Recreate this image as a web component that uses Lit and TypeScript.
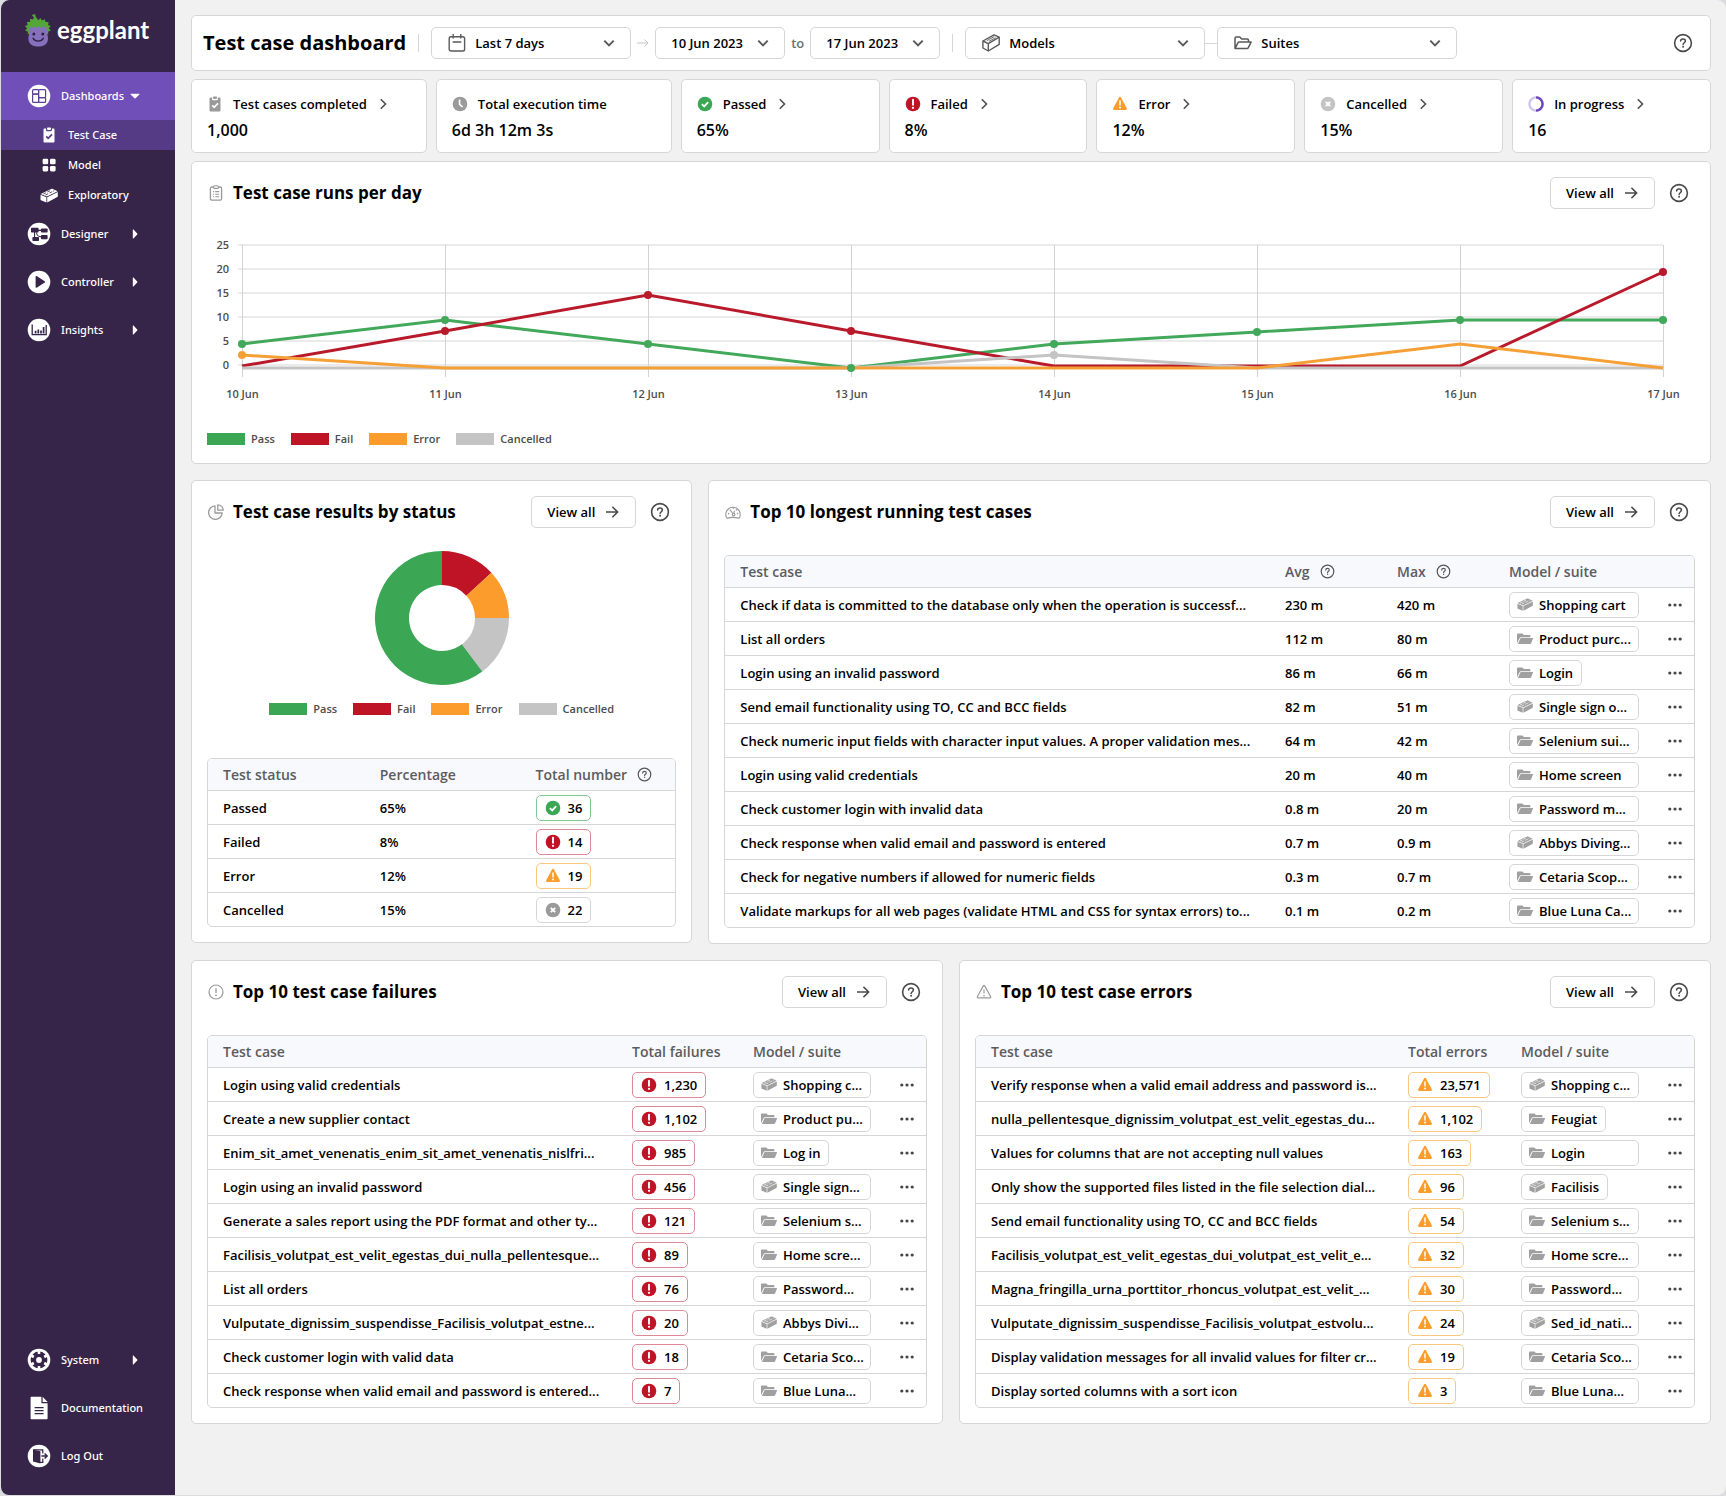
import { LitElement, html, css, svg, nothing, TemplateResult } from "lit";
import { customElement, property } from "lit/decorators.js";
import { classMap } from "lit/directives/class-map.js";

/* ---------- icons ---------- */

const QUESTION = svg`<circle cx="10" cy="10" r="8.4" fill="none" stroke="currentColor" stroke-width="1.6"/>
  <path d="M7.6 8.1C7.6 6.7 8.6 5.9 10 5.9s2.4.8 2.4 2.1c0 1.7-2.3 1.8-2.3 3.5" fill="none" stroke="currentColor" stroke-width="1.5" stroke-linecap="round"/>
  <circle cx="10.1" cy="13.8" r=".95" fill="currentColor"/>`;

const clipboard = (box: string, tick: string) => html`<svg viewBox=${box} width=${box.split(" ")[2]} height=${box.split(" ")[3]}>
  <path d="M3.6 1.6h1.5v1.7c0 .5.4.9.9.9h4c.5 0 .9-.4.9-.9V1.6h1.5c.6 0 1.1.5 1.1 1.1v11.7c0 .6-.5 1.1-1.1 1.1H3.6c-.6 0-1.1-.5-1.1-1.1V2.7c0-.6.5-1.1 1.1-1.1z" fill="currentColor"/>
  <rect x="6" y=".4" width="4" height="2.5" rx=".8" fill="currentColor"/>
  <path d="M5.2 9.4l2 2 3.8-4" fill="none" stroke=${tick} stroke-width="1.7"/></svg>`;

const icons: Record<string, TemplateResult> = {
  help: html`<svg viewBox="0 0 20 20" width="20" height="20">${QUESTION}</svg>`,
  helpSmall: html`<svg viewBox="0 0 20 20" width="15" height="15">${QUESTION}</svg>`,
  arrow: html`<svg viewBox="0 0 14 14" width="14" height="14"><path d="M1 7h11.6M7.4 1.8 12.6 7l-5.2 5.2" fill="none" stroke="currentColor" stroke-width="1.6"/></svg>`,
  arrowThin: html`<svg viewBox="0 0 12 12" width="12" height="12"><path d="M0 6h11M7.5 2.5 11 6 7.5 9.5" fill="none" stroke="currentColor" stroke-width="1"/></svg>`,
  chevronDown: html`<svg viewBox="0 0 12 12" width="12" height="12"><path d="M1.3 3.6 6 8.4l4.7-4.8" fill="none" stroke="currentColor" stroke-width="2"/></svg>`,
  chevronRight: html`<svg viewBox="0 0 12 12" width="12" height="12"><path d="M3.8 1.2 8.5 6l-4.7 4.8" fill="none" stroke="currentColor" stroke-width="1.6"/></svg>`,
  caretRight: html`<svg viewBox="0 0 10 10" width="10" height="10"><path d="M2.800.8c0-.3.400-.5.700-.2L7.200 4.500c.3.300.3.700 0 1L3.500 9.400c-.3.300-.7.100-.7-.2z" fill="currentColor"/></svg>`,
  caretDown: html`<svg viewBox="0 0 10 10" width="10" height="10"><path d="M.9 2.700h8.200c.4 0 .6.500.3.800L5.500 7.200c-.3.300-.7.300-1 0L.6 3.500c-.3-.3-.1-.8.3-.8z" fill="currentColor"/></svg>`,
  dots: html`<svg viewBox="0 0 16 4" width="16" height="4"><g fill="#444"><circle cx="2.8" cy="2" r="1.6"/><circle cx="8" cy="2" r="1.6"/><circle cx="13.2" cy="2" r="1.6"/></g></svg>`,
  calendar: html`<svg viewBox="0 0 18 18" width="18" height="18"><g fill="none" stroke="currentColor" stroke-width="1.4"><rect x="1.2" y="2.8" width="15.4" height="14.2" rx="1.8"/><path d="M5.2 0v4.6M12.8 0v4.6M4.6 8h8.8"/></g></svg>`,
  box: html`<svg viewBox="0 0 18 18" width="18" height="18"><g fill="none" stroke="currentColor" stroke-width="1.4" stroke-linejoin="round"><path d="M.9 7 12 .9l5.2 2.3v7.2L6.3 17 .9 14z"/><path d="M.9 7l5.400 2.600L17.200 3.200M6.300 9.600V17"/></g><path d="M4.800 6.700l7.400-4.100M6.900 7.400l6.700-3.700" fill="none" stroke="currentColor" stroke-width=".9"/></svg>`,
  folderOpen: html`<svg viewBox="0 0 18 14" width="18" height="14"><path d="M1 12.6V2.2C1 1.5 1.5 1 2.2 1h3.6l1.9 2h5.6c.7 0 1.2.5 1.2 1.2v1.9M1 12.6l2.9-5.7c.2-.5.7-.8 1.2-.8h12l-2.9 5.7c-.2.5-.7.8-1.2.8z" fill="none" stroke="currentColor" stroke-width="1.5" stroke-linejoin="round"/></svg>`,
  clipboardCheck: clipboard("0 0 16 16", "#fff"),
  navTest: clipboard("-1 -1 18 18", "#553a86"),
  clipboardList: html`<svg viewBox="0 0 16 16" width="16" height="16"><g fill="none" stroke="currentColor"><rect x="2.4" y="2" width="11.2" height="13.2" rx="1.4" stroke-width="1.3"/><rect x="5.6" y=".8" width="4.8" height="2.6" rx="1" stroke-width="1.1" fill="#fff"/><path d="M4.9 6.6h1.2M4.9 9.2h1.2M4.9 11.8h1.2M7.2 6.6h4M7.2 9.2h4M7.2 11.8h4" stroke-width="1.1"/></g></svg>`,
  clock: html`<svg viewBox="0 0 16 16" width="16" height="16"><circle cx="8" cy="8" r="7.3" fill="#9a9a9a"/><path d="M7.6 3.6v4.8l3 2.6" fill="none" stroke="#fff" stroke-width="1.6"/></svg>`,
  passed: html`<svg viewBox="0 0 16 16" width="16" height="16"><circle cx="8" cy="8" r="7.3" fill="#3ba755"/><path d="M4.9 8.2l2.3 2.2 4-4.2" fill="none" stroke="#fff" stroke-width="1.8"/></svg>`,
  failed: html`<svg viewBox="0 0 16 16" width="16" height="16"><circle cx="8" cy="8" r="7.3" fill="#bf1425"/><path d="M8 3.6v5.2" stroke="#fff" stroke-width="1.9" stroke-linecap="round"/><circle cx="8" cy="11.8" r="1.15" fill="#fff"/></svg>`,
  error: html`<svg viewBox="0 0 16 16" width="16" height="16"><path d="M7 1.400c.5-.8 1.600-.8 2 0l5.800 10.900c.4.800-.1 1.700-1 1.700H2.200c-.9 0-1.400-.9-1-1.700z" fill="#fb9c2c"/><path d="M8 5v4" stroke="#fff" stroke-width="1.5" stroke-linecap="round"/><circle cx="8" cy="11.500" r=".95" fill="#fff"/></svg>`,
  cancelled: html`<svg viewBox="0 0 16 16" width="16" height="16"><circle cx="8" cy="8" r="7.3" fill="var(--cancel, #9a9a9a)"/><path d="M5.8 5.8l4.400 4.400M10.200 5.800l-4.400 4.400" stroke="#fff" stroke-width="1.9"/></svg>`,
  progress: html`<svg viewBox="0 0 16 16" width="16" height="16"><g fill="none" stroke-width="2.4"><circle cx="8" cy="8" r="6.6" stroke="#cfc5ea"/><path d="M8 1.400a6.600 6.600 0 0 1 0 13.200" stroke="#6c48b5"/></g></svg>`,
  pie: html`<svg viewBox="0 0 16 16" width="16" height="16"><g fill="none" stroke="currentColor" stroke-width="1.3" stroke-linejoin="round"><path d="M7 1.800V9h7.200A6.800 6.800 0 1 1 7 1.800z"/><path d="M9.800.8v5.400h5.400A5.600 5.600 0 0 0 9.800.8z"/></g></svg>`,
  gauge: html`<svg viewBox="0 0 16 16" width="16" height="16"><g fill="none" stroke="currentColor" stroke-width="1.1" stroke-linejoin="round"><path d="M1.500 13.600A7.200 7.200 0 1 1 14.500 13.600c-.2.400-.6.600-1 .5a22 22 0 0 0-11 0c-.4.100-.8-.1-1-.5z"/><circle cx="8.600" cy="10.600" r="1.300"/><path d="M7.800 9.500 4.800 5.600M8.900 9.200l.6-2.400"/></g><g fill="currentColor"><circle cx="3.600" cy="9.600" r=".8"/><circle cx="12.500" cy="9.600" r=".8"/><circle cx="8.200" cy="4.200" r=".7"/><circle cx="11.400" cy="6" r=".8"/></g></svg>`,
  alertCircle: html`<svg viewBox="0 0 16 16" width="16" height="16"><circle cx="8" cy="8" r="7" fill="none" stroke="currentColor" stroke-width="1.2"/><path d="M8 4.300v4.600" stroke="currentColor" stroke-width="1.3"/><circle cx="8" cy="11.300" r=".9" fill="currentColor"/></svg>`,
  alertTriangle: html`<svg viewBox="0 0 16 16" width="16" height="16"><path d="M7.300 1.900c.3-.6 1.100-.6 1.400 0l6 10.800c.3.500-.1 1.200-.7 1.200H2c-.6 0-1-.7-.7-1.200z" fill="none" stroke="currentColor" stroke-width="1.2"/><path d="M8 5.600v4" stroke="currentColor" stroke-width="1.2"/><circle cx="8" cy="11.700" r=".8" fill="currentColor"/></svg>`,
  model: html`<svg viewBox="0 0 18 15" width="18" height="15"><g fill="currentColor"><path d="M.6 5.900 11.600.7c.3-.1.600-.1.800 0L17.600 3.200 6.900 8.500z"/><path d="M.5 6.700l5.900 2.500v5.300L1 12.300c-.3-.1-.5-.4-.5-.7z"/><path d="M7.200 9.200l10.600-5.200v4.300c0 .3-.2.600-.5.800L7.200 14.500z"/></g><path d="M3.300 6 6 4.700M7.300 4l2.700-1.300M5.400 7l2.700-1.300M9.500 5l2.700-1.300M13.200 3.200l1-.5" stroke="var(--stud, #fff)" stroke-width=".8" fill="none"/></svg>`,
  suite: html`<svg viewBox="0 0 16 12" width="16" height="12"><path d="M0 10.200V1.400C0 .9.400.6.800.6h4.500l1.600 1.500h5.700c.5 0 .8.300.8.800v1.300H3.800c-.5 0-.9.200-1.100.7z" fill="#a0a0a0"/><path d="M3.300 5.500c.1-.3.400-.5.700-.5h11.600c.3 0 .5.300.4.600l-2 5c-.1.300-.4.500-.8.500H.9z" fill="#a0a0a0"/></svg>`,
  navDashboards: html`<svg viewBox="0 0 24 24" width="24" height="24"><circle cx="12" cy="12" r="11.300" fill="#fff"/><g fill="none" stroke="#5a3f92" stroke-width="1.200"><rect x="5.600" y="5.600" width="6" height="4.600" rx="1"/><rect x="5.600" y="10.200" width="6" height="8.200" rx="1"/><rect x="11.600" y="5.600" width="7" height="8" rx="1"/><rect x="11.600" y="13.600" width="7" height="4.800" rx="1"/></g></svg>`,
  navGrid: html`<svg viewBox="0 0 18 18" width="18" height="18"><g fill="#fff"><rect x="2.600" y="2.800" width="5.600" height="5.400" rx="1.300"/><rect x="10" y="2.800" width="5.600" height="5.400" rx="1.300"/><rect x="2.600" y="10" width="5.600" height="5.400" rx="1.300"/><rect x="10" y="10" width="5.600" height="5.400" rx="1.300"/></g></svg>`,
  navDesigner: html`<svg viewBox="0 0 24 24" width="24" height="24"><circle cx="12" cy="12" r="11.300" fill="#fff"/><g fill="#362548"><rect x="4" y="5.800" width="7.600" height="4.800" rx=".8"/><rect x="14" y="6.400" width="6.600" height="4.200" rx=".8"/><rect x="14" y="13" width="6.600" height="4.200" rx=".8"/><rect x="5.400" y="15" width="6.600" height="4" rx=".8"/></g><path d="M11 8.400h3.400M7.600 10v5.400M9.500 10.500c.5 3.300 1.500 4.200 5 4.400" fill="none" stroke="#362548" stroke-width="1.100"/></svg>`,
  navController: html`<svg viewBox="0 0 24 24" width="24" height="24"><circle cx="12" cy="12" r="11.300" fill="#fff"/><path d="M8.600 6.800c0-.6.600-1 1.100-.7l8 5.100c.5.300.5 1.100 0 1.400l-8 5.100c-.5.300-1.100 0-1.100-.7z" fill="#362548"/></svg>`,
  navInsights: html`<svg viewBox="0 0 24 24" width="24" height="24"><circle cx="12" cy="12" r="11.300" fill="#fff"/><path d="M5.200 6.400v10.200h14V7" fill="none" stroke="#362548" stroke-width="1.300"/><path d="M8.600 15.400v-2.600M11.300 15.400v-4M14 15.400v-3M16.600 15.400V9" stroke="#362548" stroke-width="1.700"/></svg>`,
  navSystem: html`<svg viewBox="0 0 24 24" width="24" height="24"><circle cx="12" cy="12" r="11.300" fill="#fff"/><circle cx="12" cy="12" r="8.400" fill="#362548"/><path d="M12 3v3M12 18v3M19.800 7.500l-2.600 1.500M6.800 15l-2.600 1.500M19.800 16.500l-2.600-1.500M6.800 9 4.200 7.500" stroke="#fff" stroke-width="2.600"/><circle cx="12" cy="12" r="2.900" fill="#fff"/></svg>`,
  navDocs: html`<svg viewBox="0 0 24 24" width="24" height="24"><path d="M3.600 1.800c0-.6.400-1 1-1h9.800v6.400h6.200v15c0 .6-.4 1-1 1h-15c-.6 0-1-.4-1-1z" fill="#fff"/><path d="M15.600.8l5 5.200h-5z" fill="#fff"/><path d="M7.600 11.600h9M7.600 14.600h9M7.600 17.600h9" stroke="#362548" stroke-width="1.200"/></svg>`,
  navLogout: html`<svg viewBox="0 0 24 24" width="24" height="24"><circle cx="12" cy="12" r="11.300" fill="#fff"/><path d="M6 5.400l7.400 1.800v12.200L6 17.600z" fill="#362548"/><path d="M6.200 5.800h9.600v3.600M15.800 14.600v3.800h-3" fill="none" stroke="#362548" stroke-width="1.200"/><path d="M14.400 12h5.400M17.600 9.600 20.200 12l-2.600 2.400" fill="none" stroke="#362548" stroke-width="1.400"/></svg>`,
  logo: html`<svg viewBox="0 0 28 33" width="28" height="33">
    <path d="M14.500 6.200 16.400 4l1.600 2.400 3-1.200.4 2.900 3.200-.2-.5 3 2.700 1-2 2.400 2 2.200-2.800 1.200.4 2.600-3-1H6.600l-3 1 .4-2.600-2.800-1.200 1.900-2.200-2.300-2.300 2.900-1.100-.8-3 3.300-.2-.2-3 3.200.9.800-2.700 2.300 1.900C9.800 4 9.400 2.200 7.600.9L11.400 0c-.6 2 .9 4 3.100 6.200z" fill="#55a63a"/>
    <path d="M5.200 19c-.6-6.400 3-8.800 9-8.800s9.600 2.400 9 8.800c-.1 1.600.8 2.800.8 5.400 0 5.600-4 8-9.800 8s-9.800-2.400-9.800-8c0-2.600.9-3.800.8-5.400z" fill="#8770bb"/>
    <path d="M7 14.500c1-3.700 3.600-4.900 7.200-4.900s6.200 1.200 7.200 4.900l-3-2-2 1.600-2.200-2-2.200 2-2-1.600z" fill="#55a63a"/>
    <circle cx="9.800" cy="20" r="1.500" fill="#2f2043"/><circle cx="18.800" cy="20" r="1.500" fill="#2f2043"/>
    <path d="M9 24.200c2.200 3.800 8.200 3.800 10.400 0" fill="none" stroke="#2f2043" stroke-width="1.300" stroke-linecap="round"/>
  </svg>`,
};

/* ---------- data ---------- */

type Kind = "passed" | "failed" | "error" | "cancelled";
interface Suite { kind: "model" | "suite"; name: string; fit?: boolean }
const M = (name: string, fit = false): Suite => ({ kind: "model", name, fit });
const F = (name: string, fit = false): Suite => ({ kind: "suite", name, fit });

const LEGEND: [string, string][] = [["Pass", "pass"], ["Fail", "fail"], ["Error", "err"], ["Cancelled", "cancel"]];

const STATS: { icon: string; label: string; value: string; link: boolean }[] = [
  { icon: "clipboardCheck", label: "Test cases completed", value: "1,000", link: true },
  { icon: "clock", label: "Total execution time", value: "6d 3h 12m 3s", link: false },
  { icon: "passed", label: "Passed", value: "65%", link: true },
  { icon: "failed", label: "Failed", value: "8%", link: true },
  { icon: "error", label: "Error", value: "12%", link: true },
  { icon: "cancelled", label: "Cancelled", value: "15%", link: true },
  { icon: "progress", label: "In progress", value: "16", link: true },
];

const STATUS: [string, string, Kind, string][] = [
  ["Passed", "65%", "passed", "36"],
  ["Failed", "8%", "failed", "14"],
  ["Error", "12%", "error", "19"],
  ["Cancelled", "15%", "cancelled", "22"],
];

const LONGEST: [string, string, string, Suite][] = [
  ["Check if data is committed to the database only when the operation is successf...", "230 m", "420 m", M("Shopping cart")],
  ["List all orders", "112 m", "80 m", F("Product purc...")],
  ["Login using an invalid password", "86 m", "66 m", F("Login", true)],
  ["Send email functionality using TO, CC and BCC fields", "82 m", "51 m", M("Single sign o...")],
  ["Check numeric input fields with character input values. A proper validation mes...", "64 m", "42 m", F("Selenium sui...")],
  ["Login using valid credentials", "20 m", "40 m", F("Home screen")],
  ["Check customer login with invalid data", "0.8 m", "20 m", F("Password m...")],
  ["Check response when valid email and password is entered", "0.7 m", "0.9 m", M("Abbys Diving...")],
  ["Check for negative numbers if allowed for numeric fields", "0.3 m", "0.7 m", F("Cetaria Scop...")],
  ["Validate markups for all web pages (validate HTML and CSS for syntax errors) to...", "0.1 m", "0.2 m", F("Blue Luna Ca...")],
];

const FAILURES: [string, string, Suite][] = [
  ["Login using valid credentials", "1,230", M("Shopping c...")],
  ["Create a new supplier contact", "1,102", F("Product pu...")],
  ["Enim_sit_amet_venenatis_enim_sit_amet_venenatis_nislfri...", "985", F("Log in", true)],
  ["Login using an invalid password", "456", M("Single sign...")],
  ["Generate a sales report using the PDF format and other ty...", "121", F("Selenium s...")],
  ["Facilisis_volutpat_est_velit_egestas_dui_nulla_pellentesque...", "89", F("Home scre...")],
  ["List all orders", "76", F("Password...")],
  ["Vulputate_dignissim_suspendisse_Facilisis_volutpat_estne...", "20", M("Abbys Divi...")],
  ["Check customer login with valid data", "18", F("Cetaria Sco...")],
  ["Check response when valid email and password is entered...", "7", F("Blue Luna...")],
];

const ERRORS: [string, string, Suite][] = [
  ["Verify response when a valid email address and password is...", "23,571", M("Shopping c...")],
  ["nulla_pellentesque_dignissim_volutpat_est_velit_egestas_du...", "1,102", F("Feugiat", true)],
  ["Values for columns that are not accepting null values", "163", F("Login")],
  ["Only show the supported files listed in the file selection dial...", "96", M("Facilisis", true)],
  ["Send email functionality using TO, CC and BCC fields", "54", F("Selenium s...")],
  ["Facilisis_volutpat_est_velit_egestas_dui_volutpat_est_velit_e...", "32", F("Home scre...")],
  ["Magna_fringilla_urna_porttitor_rhoncus_volutpat_est_velit_...", "30", F("Password...")],
  ["Vulputate_dignissim_suspendisse_Facilisis_volutpat_estvolu...", "24", M("Sed_id_nati...")],
  ["Display validation messages for all invalid values for filter cr...", "19", F("Cetaria Sco...")],
  ["Display sorted columns with a sort icon", "3", F("Blue Luna...")],
];

/* ---------- shared styles ---------- */

const shared = css`
  :host { display: block; }
  * { box-sizing: border-box; }
  svg { display: block; flex: none; }
  button, select { font: inherit; color: inherit; margin: 0; cursor: pointer; }
  a { color: inherit; text-decoration: none; }
  .help { width: 32px; height: 32px; border: 0; background: none; padding: 0; display: grid; place-items: center; color: #4a4a4a; }
  .legend { display: flex; gap: 16px; list-style: none; margin: 0; padding: 0; font-size: 11px; line-height: 18px; color: #4d4d4d; }
  .legend li { display: flex; align-items: center; gap: 6px; }
  .swatch { width: 38px; height: 12px; }
  .pass { background: #3ba755; }
  .fail { background: #bf1425; }
  .err { background: #fb9c2c; }
  .cancel { background: #c4c4c4; }
`;

const legend = () => html`<ul class="legend">${LEGEND.map(([t, c]) => html`<li><span class="swatch ${c}"></span>${t}</li>`)}</ul>`;

/* ---------- sidebar ---------- */

@customElement("side-nav")
class SideNav extends LitElement {
  static styles = [shared, css`
    :host { display: flex; flex-direction: column; background: #362548; color: #fff; font: 500 11px/20px "Noto Sans", "Open Sans", sans-serif; padding-bottom: 15px; }
    .brand { display: flex; align-items: center; gap: 5px; height: 72px; padding: 0 0 12px 23px; font: 700 24px/32px Lato, "Open Sans", sans-serif; }
    nav { display: flex; flex-direction: column; }
    .item { display: flex; align-items: center; gap: 10px; height: 48px; padding-left: 26px; }
    .label { width: 69px; margin-right: -10px; white-space: nowrap; }
    .sub { display: flex; align-items: center; gap: 10px; height: 30px; padding-left: 39px; --stud: #362548; }
    .open { background: #714fb8; }
    .current { background: #553a86; }
    .bottom { margin-top: auto; }
  `];
  private item(icon: string, label: string, caret?: string, open = false) {
    return html`<a href="#" class=${classMap({ item: true, open })}>${icons[icon]}<span class="label">${label}</span>${caret ? icons[caret] : nothing}</a>`;
  }
  private sub(icon: string, label: string, current = false) {
    return html`<a href="#" class=${classMap({ sub: true, current })}>${icons[icon]}${label}</a>`;
  }
  render() {
    return html`
      <div class="brand">${icons.logo}<span>eggplant</span></div>
      <nav>
        ${this.item("navDashboards", "Dashboards", "caretDown", true)}
        ${this.sub("navTest", "Test Case", true)}
        ${this.sub("navGrid", "Model")}
        ${this.sub("model", "Exploratory")}
        ${this.item("navDesigner", "Designer", "caretRight")}
        ${this.item("navController", "Controller", "caretRight")}
        ${this.item("navInsights", "Insights", "caretRight")}
      </nav>
      <nav class="bottom">
        ${this.item("navSystem", "System", "caretRight")}
        ${this.item("navDocs", "Documentation")}
        ${this.item("navLogout", "Log Out")}
      </nav>`;
  }
}

/* ---------- header bar ---------- */

@customElement("filter-bar")
class FilterBar extends LitElement {
  static styles = [shared, css`
    .bar { display: flex; align-items: center; gap: 12px; height: 56px; padding: 0 11px; background: #fff; border: 1px solid #d6d6d6; border-radius: 5px; }
    h1 { margin: 0; font-size: 20px; font-weight: 700; line-height: 28px; white-space: nowrap; }
    .rule { width: 1px; height: 18px; background: #d6d6d6; }
    .group { display: flex; align-items: center; gap: 6px; color: #6e6e6e; }
    .joined { gap: 0; }
    .joined::before { content: ""; order: 1; width: 12px; height: 1px; background: #d6d6d6; }
    .joined .pick:last-child { order: 2; }
    .pale { color: #c4c4c4; }
    .pick { display: grid; align-items: center; color: #5a5a5a; }
    .pick > * { grid-area: 1 / 1; }
    .pick > svg { pointer-events: none; margin-left: 17px; }
    .pick > svg:last-child { justify-self: end; margin: 0 16px 0 0; }
    select { appearance: none; width: 100%; height: 32px; padding: 0 32px 0 15px; border: 1px solid #d6d6d6; border-radius: 5px; background: #fff; color: #000; text-overflow: ellipsis; }
    .range { width: 200px; }
    .date { width: 130px; }
    .wide { width: 240px; }
    .iconed select { padding-left: 43px; }
    .help { margin-left: auto; }
  `];
  private pick(cls: string, name: string, value: string, icon?: string) {
    return html`<label class="pick ${cls} ${icon ? "iconed" : ""}">
      <select aria-label=${name}><option>${value}</option></select>
      ${icon ? icons[icon] : nothing}${icons.chevronDown}</label>`;
  }
  render() {
    return html`<header class="bar">
      <h1>Test case dashboard</h1>
      <span class="rule"></span>
      <div class="group">
        ${this.pick("range", "Period", "Last 7 days", "calendar")}
        <span class="pale">${icons.arrowThin}</span>
        ${this.pick("date", "From", "10 Jun 2023")}
        <span>to</span>
        ${this.pick("date", "To", "17 Jun 2023")}
      </div>
      <span class="rule"></span>
      <div class="group joined">
        ${this.pick("wide", "Models", "Models", "box")}
        ${this.pick("wide", "Suites", "Suites", "folderOpen")}
      </div>
      <button class="help" aria-label="Help">${icons.help}</button>
    </header>`;
  }
}

/* ---------- stat cards ---------- */

@customElement("stat-cards")
class StatCards extends LitElement {
  static styles = [shared, css`
    .row { display: grid; grid-template-columns: repeat(2, 236fr) repeat(5, 199fr); gap: 9px; }
    .card { display: flex; flex-direction: column; gap: 4px; padding: 14px 15px 10px; background: #fff; border: 1px solid #d6d6d6; border-radius: 5px; --cancel: #c4c4c4; }
    .top { display: flex; align-items: center; gap: 10px; line-height: 20px; white-space: nowrap; }
    .top > svg { color: #9a9a9a; }
    .top > svg:last-child { color: #4f4f4f; }
    .value { font-size: 16px; line-height: 24px; }
  `];
  render() {
    return html`<div class="row">${STATS.map(s => html`<section class="card">
      ${s.link
        ? html`<a class="top" href="#">${icons[s.icon]}${s.label}${icons.chevronRight}</a>`
        : html`<div class="top">${icons[s.icon]}<span>${s.label}</span></div>`}
      <div class="value">${s.value}</div>
    </section>`)}</div>`;
  }
}

/* ---------- panel ---------- */

@customElement("dash-panel")
class DashPanel extends LitElement {
  @property() heading = "";
  @property() icon = "";
  static styles = [shared, css`
    :host { display: flex; flex-direction: column; min-width: 0; padding: 15px; background: #fff; border: 1px solid #d6d6d6; border-radius: 5px; }
    .head { display: flex; align-items: center; gap: 8px; height: 32px; }
    .mark { width: 18px; padding-left: 1px; color: #9a9a9a; }
    h2 { flex: 1; margin: 0; font-size: 17px; line-height: 24px; font-weight: 700; white-space: nowrap; }
    .all { display: flex; align-items: center; gap: 10px; height: 32px; padding: 0 16px 0 15px; border: 1px solid #d6d6d6; border-radius: 5px; background: #fff; white-space: nowrap; }
    .all svg { color: #4a4a4a; }
  `];
  render() {
    return html`<div class="head">
        <span class="mark">${icons[this.icon]}</span>
        <h2>${this.heading}</h2>
        <button class="all">View all ${icons.arrow}</button>
        <button class="help" aria-label="Help">${icons.help}</button>
      </div><slot></slot>`;
  }
}

/* ---------- charts ---------- */

const X0 = 35, STEP = 203;
const line = (ys: number[]) => ys.map((y, i) => `${X0 + i * STEP},${y}`).join(" ");
const SERIES: { color: string; ys: number[]; dots: number[] }[] = [
  { color: "#42a85a", ys: [119, 95, 119, 143, 119, 107, 95, 95], dots: [0, 1, 2, 3, 4, 5, 6, 7] },
  { color: "#b81a2b", ys: [141, 106, 70, 106, 141, 141, 141, 47], dots: [1, 2, 3, 7] },
  { color: "#c4c4c4", ys: [143, 143, 143, 143, 130, 143, 143, 143], dots: [4] },
  { color: "#f5a037", ys: [130, 143, 143, 143, 143, 143, 119, 143], dots: [0] },
];

@customElement("runs-chart")
class RunsChart extends LitElement {
  static styles = [shared, css`
    .plot { width: 100%; height: auto; margin: 16px 0; }
    text { font: 600 11px "Open Sans", sans-serif; fill: #4d4d4d; }
  `];
  render() {
    return html`<svg class="plot" viewBox="0 0 1488 189">
      ${[25, 20, 15, 10, 5, 0].map((v, i) => svg`
        <line x1="31" x2="1456" y1=${20 + i * 24} y2=${20 + i * 24} stroke="#e4e4e4" stroke-width="1.5"/>
        <text x="22" y=${24 + i * 24} text-anchor="end">${v}</text>`)}
      ${[10, 11, 12, 13, 14, 15, 16, 17].map((d, i) => svg`
        <line x1=${X0 + i * STEP + .5} x2=${X0 + i * STEP + .5} y1="20" y2="152" stroke="#d2d2d2"/>
        <text x=${X0 + i * STEP + .5} y="173" text-anchor="middle">${d} Jun</text>`)}
      ${SERIES.map(s => svg`<polyline points=${line(s.ys)} fill="none" stroke=${s.color} stroke-width="3"/>`)}
      ${SERIES.map(s => s.dots.map(i => svg`<circle cx=${X0 + i * STEP} cy=${s.ys[i]} r="4" fill=${s.color}/>`))}
    </svg>${legend()}`;
  }
}

const SLICES: [string, number][] = [["#bf1425", 47.5], ["#fb9c2c", 90], ["#c4c4c4", 143], ["#3ba755", 360]];
const ring = (from: number, to: number) => {
  const p = (deg: number, r: number) => {
    const a = (deg - 90) * Math.PI / 180;
    return `${(67 + r * Math.cos(a)).toFixed(2)} ${(67 + r * Math.sin(a)).toFixed(2)}`;
  };
  const big = to - from > 180 ? 1 : 0;
  return `M${p(from, 67)}A67 67 0 ${big} 1 ${p(to, 67)}L${p(to, 33)}A33 33 0 ${big} 0 ${p(from, 33)}Z`;
};

@customElement("status-donut")
class StatusDonut extends LitElement {
  static styles = [shared, css`
    :host { display: flex; flex-direction: column; align-items: center; gap: 15px; padding: 23px 0 40px; }
  `];
  render() {
    return html`<svg viewBox="0 0 134 134" width="134" height="134">
      ${SLICES.map(([c, to], i) => svg`<path d=${ring(i ? SLICES[i - 1][1] : 0, to)} fill=${c}/>`)}
    </svg>${legend()}`;
  }
}

/* ---------- tables ---------- */

interface Col { label: string; width?: number; help?: boolean; hidden?: boolean }

@customElement("data-table")
class DataTable extends LitElement {
  @property({ attribute: false }) cols: Col[] = [];
  @property({ attribute: false }) rows: unknown[][] = [];
  static styles = [shared, css`
    .frame { border: 1px solid #d6d6d6; border-radius: 5px; overflow: hidden; }
    table { width: 100%; table-layout: fixed; border-collapse: separate; border-spacing: 0; line-height: 20px; }
    th, td { padding: 0 0 0 16px; text-align: left; border-bottom: 1px solid #d6d6d6; white-space: nowrap; }
    th:first-child, td:first-child { padding-left: 15px; }
    th { height: 32px; background: #f7f9fd; font-size: 14px; font-weight: 600; color: #5c5c60; }
    td { height: 34px; overflow: hidden; text-overflow: ellipsis; }
    tr:last-child td { height: 33px; border-bottom: 0; }
    .th { display: flex; align-items: center; gap: 10px; }
    .tip, .more { border: 0; background: none; padding: 0; color: #565656; }
    td.menu { padding: 0 5px 0 0; }
    .more { display: grid; place-items: center; width: 28px; height: 24px; margin-left: auto; }
    .chip { display: flex; align-items: center; width: fit-content; height: 26px; border: 1px solid #d6d6d6; border-radius: 5px; background: #fff; }
    .count { gap: 7px; padding: 0 8px; }
    .link { gap: 6px; padding: 0 8px 0 7px; color: #000; }
    .link svg { width: 16px; color: #a0a0a0; }
    .full { width: calc(100% - 16px); padding-right: 0; }
    .passed { border-color: #7cc890; }
    .failed { border-color: #dc8a95; }
    .error { border-color: #f9c77f; }
  `];
  private cell(v: unknown) {
    if (Array.isArray(v)) return html`<td><span class="chip count ${v[0]}">${icons[v[0]]}${v[1]}</span></td>`;
    if (v && typeof v === "object") {
      const s = v as Suite;
      return html`<td><a href="#" class=${classMap({ chip: true, link: true, full: !s.fit })}>${icons[s.kind]}${s.name}</a></td>`;
    }
    if (v === null) return html`<td class="menu"><button class="more" aria-label="More">${icons.dots}</button></td>`;
    return html`<td>${v}</td>`;
  }
  render() {
    return html`<div class="frame"><table>
      <colgroup>${this.cols.map(c => html`<col width=${c.width ?? nothing}>`)}</colgroup>
      <thead><tr>${this.cols.map(c => c.hidden ? html`<th></th>` : html`<th><div class="th">${c.label}${c.help ? html`<button class="tip" aria-label="Help">${icons.helpSmall}</button>` : nothing}</div></th>`)}</tr></thead>
      <tbody>${this.rows.map(r => html`<tr>${r.map(v => this.cell(v))}</tr>`)}</tbody>
    </table></div>`;
  }
}

const MENU: Col = { label: "", width: 39, hidden: true };

/* ---------- page ---------- */

@customElement("app-root")
class AppRoot extends LitElement {
  static styles = [shared, css`
    :host { font-family: "Open Sans", sans-serif; font-size: 13px; font-weight: 600; line-height: 20px; color: #000; background: #dcdce0; }
    .app { display: flex; min-height: 100vh; border: 1px solid #dcdce0; border-width: 0 0 1px 1px; border-radius: 9px; background: #f1f1f1; overflow: hidden; }
    side-nav { flex: 0 0 174px; }
    main { flex: 1; min-width: 0; display: flex; flex-direction: column; gap: 16px; padding: 15px 15px 16px 16px; }
    .stack { display: flex; flex-direction: column; gap: 8px; }
    .thirds { display: grid; grid-template-columns: 1fr 2fr; gap: 16px; align-items: start; }
    .halves { display: grid; grid-template-columns: 1fr 1fr; gap: 16px; }
    .spaced { margin-top: 27px; }
  `];
  render() {
    return html`<div class="app">
      <side-nav></side-nav>
      <main>
        <div class="stack">
          <filter-bar></filter-bar>
          <stat-cards></stat-cards>
          <dash-panel heading="Test case runs per day" icon="clipboardList"><runs-chart></runs-chart></dash-panel>
        </div>
        <div class="thirds">
          <dash-panel heading="Test case results by status" icon="pie">
            <status-donut></status-donut>
            <data-table
              .cols=${[{ label: "Test status" }, { label: "Percentage" }, { label: "Total number", help: true }]}
              .rows=${STATUS.map(([a, b, k, n]) => [a, b, [k, n]])}></data-table>
          </dash-panel>
          <dash-panel heading="Top 10 longest running test cases" icon="gauge">
            <data-table class="spaced"
              .cols=${[{ label: "Test case" }, { label: "Avg", width: 112, help: true }, { label: "Max", width: 112, help: true }, { label: "Model / suite", width: 162 }, MENU]}
              .rows=${LONGEST.map(([a, b, c, s]) => [a, b, c, s, null])}></data-table>
          </dash-panel>
        </div>
        <div class="halves">
          <dash-panel heading="Top 10 test case failures" icon="alertCircle">
            <data-table class="spaced"
              .cols=${[{ label: "Test case" }, { label: "Total failures", width: 121 }, { label: "Model / suite", width: 150 }, MENU]}
              .rows=${FAILURES.map(([a, n, s]) => [a, ["failed", n], s, null])}></data-table>
          </dash-panel>
          <dash-panel heading="Top 10 test case errors" icon="alertTriangle">
            <data-table class="spaced"
              .cols=${[{ label: "Test case" }, { label: "Total errors", width: 113 }, { label: "Model / suite", width: 150 }, MENU]}
              .rows=${ERRORS.map(([a, n, s]) => [a, ["error", n], s, null])}></data-table>
          </dash-panel>
        </div>
      </main>
    </div>`;
  }
}
